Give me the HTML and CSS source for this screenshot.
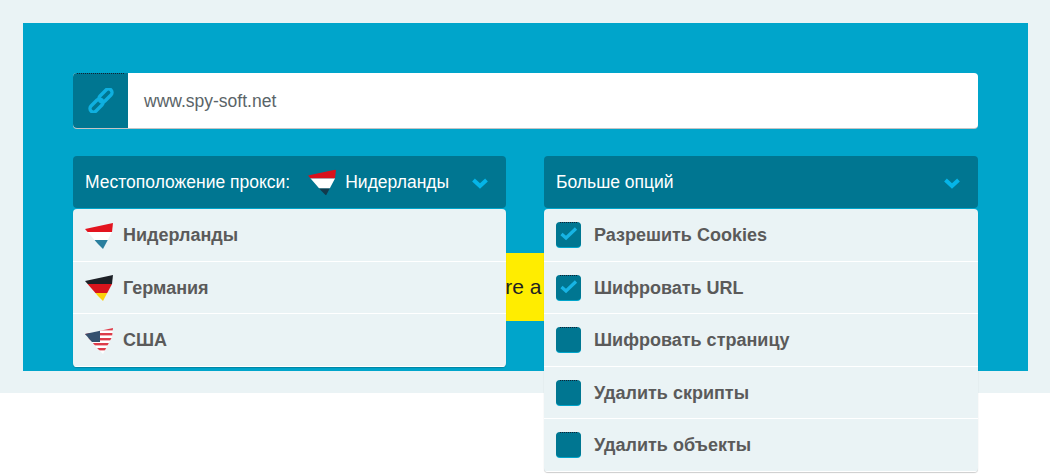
FILE: index.html
```html
<!DOCTYPE html>
<html>
<head>
    <meta charset="UTF-8">
    <title>Proxy</title>
    <link rel="stylesheet" href="styles.css">
</head>
<body>
    <svg class="defs" width="0" height="0">
        <defs>
            <clipPath id="flag-shape">
                <polygon points="0,6 28,0 27,9 18,26 13,21"/>
            </clipPath>
        </defs>
    </svg>
    <div class="page">
        <div class="panel">
            <div class="url-row">
                <div class="url-icon">
                    <svg width="26" height="25" viewBox="0 0 26 25" fill="none" stroke="#0fb0e0" stroke-width="3.4">
                        <rect x="14" y="-0.25" width="7" height="15.5" rx="3.5" transform="rotate(45 17.5 7.5)"/>
                        <rect x="5" y="9.75" width="7" height="15.5" rx="3.5" transform="rotate(45 8.5 17.5)"/>
                    </svg>
                </div>
                <div class="url-text">www.spy-soft.net</div>
            </div>
            <div class="select-row">
                <div class="select-col">
                    <div class="select-head">
                        <span class="head-label">Местоположение прокси:</span>
                        <svg class="flag head-flag" width="28" height="27" viewBox="0 0 28 26">
                            <g clip-path="url(#flag-shape)">
                                <rect width="28" height="9" fill="#d8101c"/>
                                <rect y="9" width="28" height="10" fill="#fff"/>
                                <rect y="19" width="28" height="7" fill="#123a4c"/>
                            </g>
                        </svg>
                        <span class="head-value">Нидерланды</span>
                        <svg class="chevron" width="16" height="11" viewBox="0 0 16 11" fill="none" stroke="#05b5e8" stroke-width="4"><path d="M1.5 2 L8 8 L14.5 2"/></svg>
                    </div>
                    <div class="dropdown">
                        <div class="item">
                            <svg class="flag" width="28" height="26" viewBox="0 0 28 26">
                                <g clip-path="url(#flag-shape)">
                                    <rect width="28" height="9" fill="#e3141f"/>
                                    <rect y="9" width="28" height="8" fill="#fff"/>
                                    <rect y="17" width="28" height="9" fill="#2a7f9e"/>
                                </g>
                            </svg>
                            <span class="item-text">Нидерланды</span>
                        </div>
                        <div class="item">
                            <svg class="flag" width="28" height="26" viewBox="0 0 28 26">
                                <g clip-path="url(#flag-shape)">
                                    <rect width="28" height="9" fill="#1c2026"/>
                                    <rect y="9" width="28" height="9" fill="#d9141c"/>
                                    <rect y="18" width="28" height="8" fill="#fbd00c"/>
                                </g>
                            </svg>
                            <span class="item-text">Германия</span>
                        </div>
                        <div class="item">
                            <svg class="flag" width="28" height="26" viewBox="0 0 28 26">
                                <g clip-path="url(#flag-shape)">
                                    <rect width="28" height="26" fill="#fff"/>
                                    <rect width="28" height="2.4" fill="#dd3c4a"/>
                                    <rect y="5" width="28" height="2.4" fill="#dd3c4a"/>
                                    <rect y="10" width="28" height="2.4" fill="#dd3c4a"/>
                                    <rect y="15" width="28" height="2.4" fill="#dd3c4a"/>
                                    <rect y="20" width="28" height="2.4" fill="#dd3c4a"/>
                                    <rect width="15" height="14" fill="#34506e"/>
                                </g>
                            </svg>
                            <span class="item-text">США</span>
                        </div>
                    </div>
                </div>
                <div class="select-col">
                    <div class="select-head">
                        <span class="head-label">Больше опций</span>
                        <svg class="chevron" width="16" height="11" viewBox="0 0 16 11" fill="none" stroke="#05b5e8" stroke-width="4"><path d="M1.5 2 L8 8 L14.5 2"/></svg>
                    </div>
                    <div class="dropdown">
                        <div class="item">
                            <div class="check">
                                <svg width="25" height="25" viewBox="0 0 25 25" fill="none" stroke="#17b4e4" stroke-width="3.2"><path d="M5.5 12 L10 16 L20 6.5"/></svg>
                            </div>
                            <span class="item-text">Разрешить Cookies</span>
                        </div>
                        <div class="item">
                            <div class="check">
                                <svg width="25" height="25" viewBox="0 0 25 25" fill="none" stroke="#17b4e4" stroke-width="3.2"><path d="M5.5 12 L10 16 L20 6.5"/></svg>
                            </div>
                            <span class="item-text">Шифровать URL</span>
                        </div>
                        <div class="item"><div class="check"></div><span class="item-text">Шифровать страницу</span></div>
                        <div class="item"><div class="check"></div><span class="item-text">Удалить скрипты</span></div>
                        <div class="item"><div class="check"></div><span class="item-text">Удалить объекты</span></div>
                    </div>
                </div>
            </div>
            <div class="banner">Secure a</div>
        </div>
    </div>
</body>
</html>
```

FILE: styles.css
```css
body {
    margin: 0;
    min-height: 476px;
    overflow: hidden;
    background-color: #fff;
    font-family: "Liberation Sans", Arial, sans-serif;
}
.defs {
    position: absolute;
}
.page {
    height: 393px;
    box-sizing: border-box;
    padding: 23px 22px 22px 23px;
    background-color: #eaf3f5;
}
.panel {
    height: 348px;
    box-sizing: border-box;
    padding: 50px 50px 0;
    background-color: #00a5cb;
}
.url-row {
    display: flex;
    height: 55px;
    border-radius: 4px;
    background-color: #fff;
    box-shadow: 0 1px 0 #c4c4c4;
    overflow: hidden;
}
.url-icon {
    position: relative;
    width: 55px;
    display: flex;
    align-items: center;
    justify-content: center;
    background-color: #007691;
}
.url-icon::before,
.check::before {
    content: "";
    position: absolute;
    top: 0;
    left: 4px;
    right: 4px;
    border-top: 1px dotted #123;
}
.url-text {
    flex: 1;
    display: flex;
    align-items: center;
    padding: 2px 0 0 16px;
    font-size: 17.5px;
    color: #5a6468;
}
.select-row {
    display: grid;
    grid-template-columns: 433px 434px;
    justify-content: space-between;
    margin-top: 28px;
}
.select-col {
    position: relative;
    z-index: 1;
}
.select-head {
    height: 52px;
    display: flex;
    align-items: center;
    padding: 0 18.5px 0 12px;
    border-radius: 4px;
    background-color: #007691;
    color: #fff;
    font-size: 17.5px;
}
.head-flag {
    margin-left: 18px;
}
.head-value {
    margin-left: 9px;
}
.chevron {
    margin-left: auto;
    margin-top: 3px;
}
.dropdown {
    position: absolute;
    top: 53px;
    left: 0;
    right: 0;
    border-radius: 4px;
    background-color: #eaf3f5;
    box-shadow: 0 1px 1px rgba(0, 0, 0, 0.2);
    overflow: hidden;
}
.item {
    height: 51.5px;
    display: flex;
    align-items: center;
    gap: 10px;
    padding-left: 12px;
    border-bottom: 1px solid #fff;
    font-size: 18px;
    font-weight: bold;
    color: #5a5a5a;
}
.item-text {
    padding-top: 2px;
}
.flag {
    flex: none;
}
.item .flag {
    margin-top: 2px;
}
.check {
    position: relative;
    width: 25px;
    height: 25px;
    margin-right: 3px;
    border-radius: 4px;
    background-color: #007691;
    box-shadow: 0 1px 0 #00a5cb;
}
.banner {
    margin-top: 45px;
    height: 68px;
    padding-right: 52px;
    line-height: 68px;
    background-color: #ffed00;
    text-align: center;
    font-size: 21px;
    color: #222;
}
```
